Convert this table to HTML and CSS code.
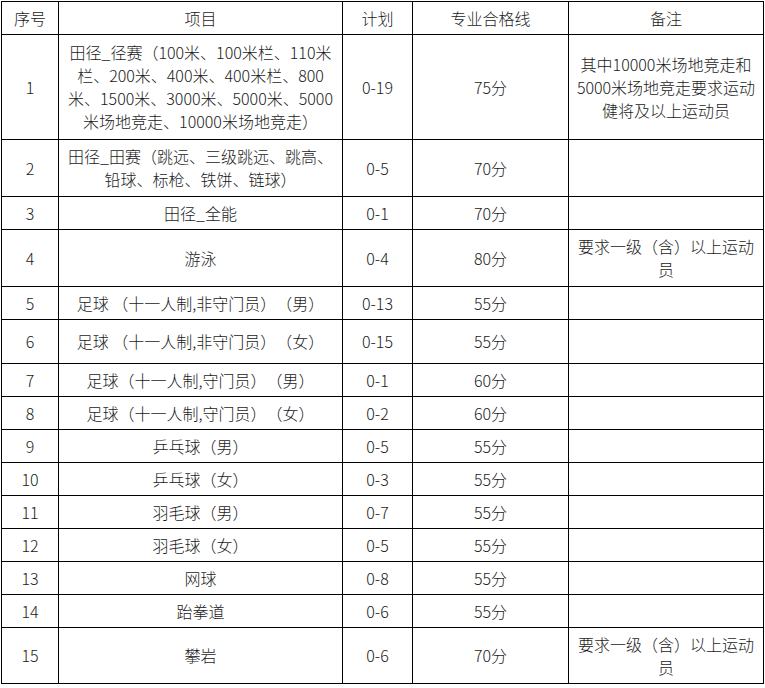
FILE: index.html
```html
<!DOCTYPE html>
<html lang="zh-CN">
<head>
<meta charset="utf-8">
<title>专业合格线</title>
<link rel="stylesheet" href="styles.css">
</head>
<body>
<table class="plan">
  <colgroup>
    <col class="c-no">
    <col class="c-item">
    <col class="c-plan">
    <col class="c-line">
    <col class="c-note">
  </colgroup>
  <tbody>
    <tr class="h33"><td>序号</td><td>项目</td><td>计划</td><td>专业合格线</td><td>备注</td></tr>
    <tr class="h105"><td>1</td><td>田径_径赛（100米、100米栏、110米<br>栏、200米、400米、400米栏、800<br>米、1500米、3000米、5000米、5000<br>米场地竞走、10000米场地竞走）</td><td>0-19</td><td>75分</td><td>其中10000米场地竞走和<br>5000米场地竞走要求运动<br>健将及以上运动员</td></tr>
    <tr class="h57"><td>2</td><td>田径_田赛（跳远、三级跳远、跳高、<br>铅球、标枪、铁饼、链球）</td><td>0-5</td><td>70分</td><td></td></tr>
    <tr class="h33"><td>3</td><td>田径_全能</td><td>0-1</td><td>70分</td><td></td></tr>
    <tr class="h57"><td>4</td><td>游泳</td><td>0-4</td><td>80分</td><td>要求一级（含）以上运动<br>员</td></tr>
    <tr class="h33"><td>5</td><td>足球 （十一人制,非守门员）（男）</td><td>0-13</td><td>55分</td><td></td></tr>
    <tr class="h44"><td>6</td><td>足球 （十一人制,非守门员）（女）</td><td>0-15</td><td>55分</td><td></td></tr>
    <tr class="h33"><td>7</td><td>足球（十一人制,守门员）（男）</td><td>0-1</td><td>60分</td><td></td></tr>
    <tr class="h33"><td>8</td><td>足球（十一人制,守门员）（女）</td><td>0-2</td><td>60分</td><td></td></tr>
    <tr class="h33"><td>9</td><td>乒乓球（男）</td><td>0-5</td><td>55分</td><td></td></tr>
    <tr class="h33"><td>10</td><td>乒乓球（女）</td><td>0-3</td><td>55分</td><td></td></tr>
    <tr class="h33"><td>11</td><td>羽毛球（男）</td><td>0-7</td><td>55分</td><td></td></tr>
    <tr class="h33"><td>12</td><td>羽毛球（女）</td><td>0-5</td><td>55分</td><td></td></tr>
    <tr class="h33"><td>13</td><td>网球</td><td>0-8</td><td>55分</td><td></td></tr>
    <tr class="h33"><td>14</td><td>跆拳道</td><td>0-6</td><td>55分</td><td></td></tr>
    <tr class="h56"><td>15</td><td>攀岩</td><td>0-6</td><td>70分</td><td>要求一级（含）以上运动<br>员</td></tr>
  </tbody>
</table>
</body>
</html>
```

FILE: styles.css
```css
html, body {
  margin: 0;
  padding: 0;
  background: #ffffff;
}

.plan {
  margin: 1px 0 0 1px;
  width: 763px;
  table-layout: fixed;
  border-collapse: collapse;
  font-family: "Noto Sans CJK SC", "Noto Sans", sans-serif;
  font-size: 16px;
  font-weight: 300;
  line-height: 23px;
  color: #1a1a1a;
  text-spacing-trim: space-all;
}

.c-no { width: 57px; }
.c-item { width: 284px; }
.c-plan { width: 70px; }
.c-line { width: 156px; }
.c-note { width: 195px; }

.plan td {
  border: 1px solid #000;
  padding: 0;
  text-align: center;
  vertical-align: middle;
  white-space: nowrap;
  overflow: hidden;
}

.h33 { height: 33px; }
.h44 { height: 44px; }
.h56 { height: 56px; }
.h57 { height: 57px; }
.h105 { height: 105px; }
```
